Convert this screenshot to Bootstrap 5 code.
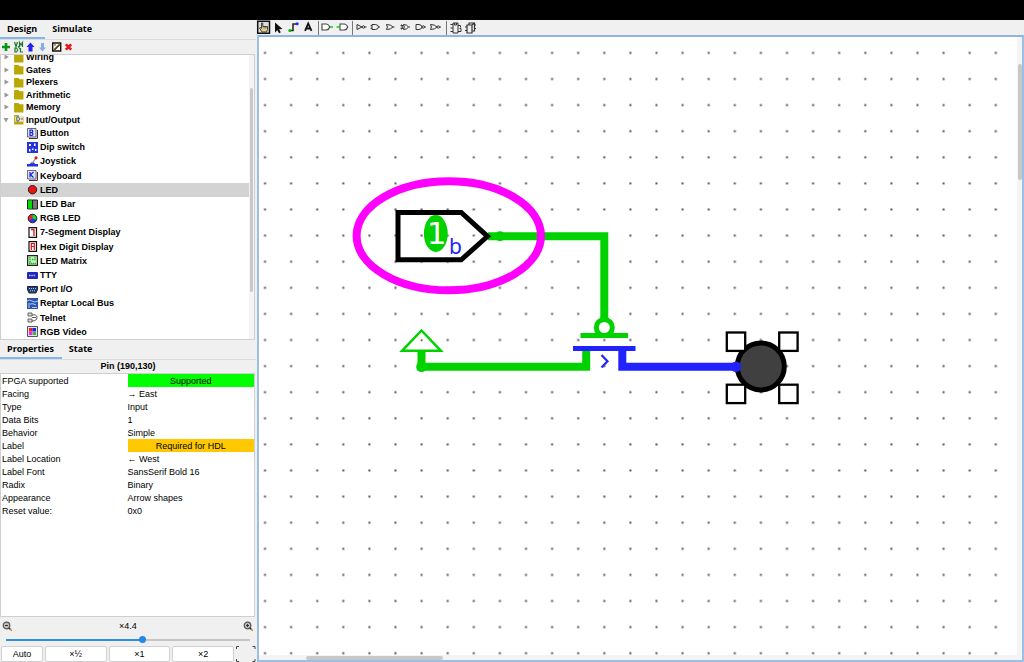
<!DOCTYPE html>
<html lang="en">
<head>
<meta charset="utf-8">
<meta name="viewport" content="width=device-width, initial-scale=1">
<title>Circuit editor</title>
<link href="https://cdn.jsdelivr.net/npm/bootstrap@5.3.0/dist/css/bootstrap.min.css" rel="stylesheet">
<style>
  body { font: 9px/12px "Liberation Sans", Arial, sans-serif; color: #000; background: #f0f0f0; }
  button { color: #000; }
  .titlebar { height: 20px; background: #000; }
  .sidebar { width: 256px; }
  .canvas-pane { background: #fff; border: 2px solid #9bbfe6; border-top-color: #8fb6de; margin-left: 1px; }

  .pane-tabs { height: 20px; border-bottom: 1px solid #dcdcdc; }
  .pane-tab { font: bold 9px/18px "Open Sans", "Noto Sans", sans-serif; background: none; border: 0; border-bottom: 2px solid transparent; padding: 0 8px 0 7px; }
  .pane-tab.active { border-bottom-color: #83b7e8; }

  .tool { width: 15px; height: 15px; padding: 0; border: 0; background: none; line-height: 0; flex: none; }
  .tool svg { display: block; width: 15px; height: 15px; }
  .tool-sep { width: 1px; height: 14px; background: #777; margin: 0 1px 0 2px; flex: none; }
  .lib-tools { height: 14px; }
  .lib-tools .tool { width: 12px; margin-right: 1px; }
  .lib-tools .tool svg { width: 12px; }

  .tree-box { height: 286px; background: #fff; border: 1px solid #cfcfcf; margin-right: 1px; flex: none; }
  .tree { font-weight: bold; margin: -4px 5px 0 0; }
  .tree ul { display: grid; grid-auto-rows: 1fr; }
  .tree .folders { height: 75px; }
  .tree .parts { height: 213px; }
  .tree li { display: flex; align-items: center; min-height: 0; white-space: nowrap; }
  .tree svg { flex: none; display: block; }
  .folders .twist { width: 8px; height: 8px; margin: 0 3px 0 1px; }
  .folders .pic { width: 11px; height: 11px; margin-right: 2px; }
  .parts li { padding-left: 26px; }
  .parts .pic { width: 11px; height: 11px; margin-right: 2px; }
  .parts .chosen { background: #d3d3d3; }

  .track { background: #f4f4f4; }
  .track-v { width: 5px; top: 0; bottom: 0; right: 0; }
  .track-h { height: 5px; left: 0; right: 0; bottom: 0; }
  .thumb { background: #c8c8c8; border-radius: 2px; }
  .tree-box .thumb { width: 3px; height: 204px; margin: 33px 1px 0; }
  .track-v .canvas-thumb { width: 4px; height: 116px; margin: 27px 0 0 1px; }
  .track-h .canvas-thumb { width: 137px; height: 4px; margin: 1px 0 0 47px; }

  .props-title { font-size: 9px; line-height: 13px; font-weight: bold; margin: 0; text-align: center; }
  .props-box { background: #fff; border: 1px solid #cfcfcf; margin-right: 1px; }
  .props { width: 100%; table-layout: fixed; }
  .props th { font-weight: normal; width: 50%; }
  .props th, .props td { height: 13px; padding: 0; line-height: 12px; white-space: nowrap; }
  .props th { padding-left: 1px; }
  .flag-ok { background: #00ff00; text-align: center; }
  .flag-warn { background: #ffc800; text-align: center; }

  .zoom-row { height: 18px; padding: 0 2px; }
  .zoom-row svg { width: 11px; height: 11px; }
  .zoom-slider { -webkit-appearance: none; appearance: none; display: block; height: 9px; margin: 0 6px; background: linear-gradient(to right, #2f8de4 56%, #c4c4c4 56%) center / 100% 2px no-repeat; }
  .zoom-slider::-webkit-slider-thumb { -webkit-appearance: none; width: 7px; height: 7px; border-radius: 50%; background: #2389e6; border: 0; }
  .zoom-btns { height: 18px; padding: 2px 0 0 1px; gap: 2px; }
  .zoom-btn { height: 16px; padding: 0; background: #fff; border: 1px solid #d0d0d0; border-radius: 2px; line-height: 14px; flex: 3 1 0; }
  .zoom-btn.auto { flex: 2 1 0; }
  .zoom-btns .fit { width: 20px; height: 16px; padding: 0; border: 0; background: none; flex: none; }
  .circuit { width: 100%; height: 100%; display: block; }
</style>
<script src="https://cdn.jsdelivr.net/npm/bootstrap@5.3.0/dist/js/bootstrap.bundle.min.js"></script>
</head>
<body>
<div class="d-flex flex-column vh-100 overflow-hidden">
  <header class="titlebar flex-shrink-0"></header>
  <div class="d-flex flex-grow-1 overflow-hidden">

    <aside class="sidebar d-flex flex-column flex-shrink-0">
      <div class="pane-tabs d-flex flex-shrink-0">
        <button class="pane-tab active">Design</button>
        <button class="pane-tab">Simulate</button>
      </div>
      <div class="lib-tools d-flex align-items-center flex-shrink-0">
        <button class="tool" aria-label="Add"><svg viewBox="0 0 12 15"><path d="M6 3v8M2 7h8" stroke="#0a9614" stroke-width="2.6"/></svg></button>
        <button class="tool" aria-label="HDL"><svg viewBox="0 0 12 15" fill="none" stroke="#1c7a2a"><path d="M1.500 2l1.500 4.500L4.500 2M6.500 7V2.500L8 5l1.500-2.500V7M2 8v4h1.500l1.300-2-1.300-2zM7.500 8v4H10M5 6l2 3" stroke-width="1.200"/></svg></button>
        <button class="tool" aria-label="Move up"><svg viewBox="0 0 12 15"><path d="M4.500 2.500L8.500 7H6.500v4.500h-4V7h-2z" fill="#2222ee"/></svg></button>
        <button class="tool" aria-label="Move down"><svg viewBox="0 0 12 15"><path d="M3.500 11.500L7 7.500H5V3H2v4.500H0z" fill="#86aee4"/></svg></button>
        <button class="tool" aria-label="Edit"><svg viewBox="0 0 12 15"><path d="M.7 3h8v8h-8z" fill="#fff" stroke="#111" stroke-width="1.400"/><path d="M2 10l6-6" stroke="#897327" stroke-width="2"/><path d="M2 10.500l6-6M2 5h2" stroke="#111" stroke-width=".8"/></svg></button>
        <button class="tool" aria-label="Remove"><svg viewBox="0 0 12 15"><path d="M.8 4.300l5.400 5.400M6.200 4.300L.8 9.700" stroke="#e81818" stroke-width="2.600"/></svg></button>
      </div>

      <div class="tree-box position-relative overflow-hidden">
        <div class="tree">
          <ul class="folders list-unstyled mb-0">
            <li><svg class="twist" viewBox="0 0 8 8"><path d="M2.500 1.500L7 4l-4.500 2.500z" fill="#999"/></svg><svg class="pic" viewBox="0 0 10 10"><path d="M1 1h4l1 1h3.500v7.500H1z" fill="#b8a800"/></svg><span>Wiring</span></li>
            <li><svg class="twist" viewBox="0 0 8 8"><path d="M2.500 1.500L7 4l-4.500 2.500z" fill="#999"/></svg><svg class="pic" viewBox="0 0 10 10"><path d="M1 1h4l1 1h3.500v7.500H1z" fill="#b8a800"/></svg><span>Gates</span></li>
            <li><svg class="twist" viewBox="0 0 8 8"><path d="M2.500 1.500L7 4l-4.500 2.500z" fill="#999"/></svg><svg class="pic" viewBox="0 0 10 10"><path d="M1 1h4l1 1h3.500v7.500H1z" fill="#b8a800"/></svg><span>Plexers</span></li>
            <li><svg class="twist" viewBox="0 0 8 8"><path d="M2.500 1.500L7 4l-4.500 2.500z" fill="#999"/></svg><svg class="pic" viewBox="0 0 10 10"><path d="M1 1h4l1 1h3.500v7.500H1z" fill="#b8a800"/></svg><span>Arithmetic</span></li>
            <li><svg class="twist" viewBox="0 0 8 8"><path d="M2.500 1.500L7 4l-4.500 2.500z" fill="#999"/></svg><svg class="pic" viewBox="0 0 10 10"><path d="M1 1h4l1 1h3.500v7.500H1z" fill="#b8a800"/></svg><span>Memory</span></li>
            <li><svg class="twist" viewBox="0 0 8 8"><path d="M1.500 2h5L4 6.500z" fill="#999"/></svg><svg class="pic" viewBox="0 0 10 10"><path d="M1 1h4l1 1h3.500v7.500H1z" fill="#b8a800"/><path d="M2 2h7v5H2z" fill="#eee"/><path d="M3.500 2.500h1.500q2 2 0 4H3.500zM7 4.500h2" fill="none" stroke="#444" stroke-width=".8"/></svg><span>Input/Output</span></li>
          </ul>
          <ul class="parts list-unstyled mb-0">
            <li><svg class="pic" viewBox="0 0 11 11"><path d="M2 10.400h8.400V2" fill="none" stroke="#222"/><path d="M.5.500h8.500V9H.5z" fill="#dfe4ff" stroke="#333" stroke-width=".7"/><path d="M3 2v5.500h2q1.800-1.400 0-2.800H3h2q1.500-1.400 0-2.700z" fill="none" stroke="#1a22e0" stroke-width="1.200"/></svg>Button</li>
            <li><svg class="pic" viewBox="0 0 11 11"><path d="M0 0h11v11H0z" fill="#2633dd"/><path d="M2 2h2v2H2zM7 1.500h1.500V4H7zM2 7h1.500v2.500H2zM5 6.500h1.500V8H5zM8 7h1.500v2H8z" fill="#fff"/></svg>Dip switch</li>
            <li><svg class="pic" viewBox="0 0 11 11"><path d="M0 8h3l1-1.500h3L8 8h3v2.500H0z" fill="#2430e0"/><path d="M5 7.500L9 2" stroke="#888" stroke-width="1.200"/><circle cx="9" cy="1.800" r="1.600" fill="#e01818"/></svg>Joystick</li>
            <li><svg class="pic" viewBox="0 0 11 11"><path d="M2 10.400h8.400V2" fill="none" stroke="#222"/><path d="M.5.500h8.500V9H.5z" fill="#dfe4ff" stroke="#333" stroke-width=".7"/><path d="M3 2v5.500M6.500 2L3.500 4.700l3 2.800" fill="none" stroke="#1a22e0" stroke-width="1.200"/></svg>Keyboard</li>
            <li class="chosen"><svg class="pic" viewBox="0 0 11 11"><circle cx="5.500" cy="5.700" r="4.200" fill="#e81414" stroke="#222" stroke-width="1"/></svg>LED</li>
            <li><svg class="pic" viewBox="0 0 11 11"><path d="M.5 1h10v9H.5z" fill="#777" stroke="#222"/><path d="M1 1.500h4v8H1z" fill="#0d0"/><path d="M5.500 1v9" stroke="#222"/></svg>LED Bar</li>
            <li><svg class="pic" viewBox="0 0 11 11"><circle cx="5.500" cy="5.500" r="4.300" fill="#2436e8"/><path d="M5.500 5.500V1.200A4.300 4.300 0 0 0 2 8z" fill="#e22"/><path d="M5.500 5.500V1.200A4.300 4.300 0 0 1 9.500 7z" fill="#1d2"/><circle cx="5.500" cy="5.500" r="4.300" fill="none" stroke="#222"/></svg>RGB LED</li>
            <li><svg class="pic" viewBox="0 0 11 11"><path d="M2 .6h7.500v9.800H2z" fill="#fff" stroke="#111" stroke-width="1.200"/><path d="M4 2.500h3V9" fill="none" stroke="#e01010" stroke-width="1.300"/></svg>7-Segment Display</li>
            <li><svg class="pic" viewBox="0 0 11 11"><path d="M2 .6h7.500v9.800H2z" fill="#fff" stroke="#111" stroke-width="1.200"/><path d="M4.300 9V2.500h3V9M4.300 5.500h3" fill="none" stroke="#e01010" stroke-width="1.200"/></svg>Hex Digit Display</li>
            <li><svg class="pic" viewBox="0 0 11 11"><path d="M.6.600h9.800v9.800H.6z" fill="#c9f5c4" stroke="#222" stroke-width="1.200"/><path d="M3 2v6M8 2v4M2 8.500h7M5 4.500h2" stroke="#18b418" stroke-width="1.300" stroke-dasharray="1.500 .5"/></svg>LED Matrix</li>
            <li><svg class="pic" viewBox="0 0 11 11"><rect x="0" y="2" width="11" height="7" rx="1" fill="#1b26c4"/><path d="M2 5.500h7" stroke="#d2c878" stroke-width="1.500" stroke-dasharray="1.500 .8"/></svg>TTY</li>
            <li><svg class="pic" viewBox="0 0 11 11"><path d="M.5 2.500h10v3L9 9H2L.5 5.500z" fill="#1f3a8f" stroke="#222"/><path d="M2 4.500h7M3 6.800h5" stroke="#9ce09c" stroke-dasharray="1 1"/></svg>Port I/O</li>
            <li><svg class="pic" viewBox="0 0 11 11"><path d="M0 0h11v11H0z" fill="#2b55ad"/><path d="M0 3q3-2 5 0t6 0M3 6q3-1 6 1M5 9.500h5M2 5v5" fill="none" stroke="#b9cbed"/></svg>Reptar Local Bus</li>
            <li><svg class="pic" viewBox="0 0 11 11"><path d="M1 1h4v3H1zM1 7h4v3H1z" fill="#ddd" stroke="#555" stroke-width=".9"/><path d="M5 3q5-1 5 2.500T5 9M5 5.500h4" fill="none" stroke="#333" stroke-width=".8"/></svg>Telnet</li>
            <li><svg class="pic" viewBox="0 0 11 11"><path d="M.5.500h10v10H.5z" fill="#e6e6e6" stroke="#555"/><path d="M2 2h3.500v3.500H2z" fill="#e22"/><path d="M5.500 2H9v3.500H5.500z" fill="#22e"/><path d="M2 5.500h3.500V9H2z" fill="#e2e"/><path d="M6 6h3v3H6z" fill="#3b3"/></svg>RGB Video</li>
          </ul>
        </div>
        <div class="track track-v position-absolute"><div class="thumb"></div></div>
      </div>

      <div class="pane-tabs d-flex flex-shrink-0">
        <button class="pane-tab active">Properties</button>
        <button class="pane-tab">State</button>
      </div>
      <h2 class="props-title flex-shrink-0">Pin (190,130)</h2>
      <div class="props-box flex-grow-1 overflow-hidden">
        <table class="props">
          <tbody>
            <tr><th scope="row">FPGA supported</th><td class="flag-ok">Supported</td></tr>
            <tr><th scope="row">Facing</th><td>→ East</td></tr>
            <tr><th scope="row">Type</th><td>Input</td></tr>
            <tr><th scope="row">Data Bits</th><td>1</td></tr>
            <tr><th scope="row">Behavior</th><td>Simple</td></tr>
            <tr><th scope="row">Label</th><td class="flag-warn">Required for HDL</td></tr>
            <tr><th scope="row">Label Location</th><td>← West</td></tr>
            <tr><th scope="row">Label Font</th><td>SansSerif Bold 16</td></tr>
            <tr><th scope="row">Radix</th><td>Binary</td></tr>
            <tr><th scope="row">Appearance</th><td>Arrow shapes</td></tr>
            <tr><th scope="row">Reset value:</th><td>0x0</td></tr>
          </tbody>
        </table>
      </div>
      <div class="zoom-row d-flex align-items-center justify-content-between flex-shrink-0">
        <svg viewBox="0 0 11 11"><circle cx="4.500" cy="4.500" r="3.300" fill="#bbb" stroke="#555" stroke-width="1.200"/><path d="M3 4.500h3" stroke="#333"/><path d="M7 7l1.500 1.500" stroke="#333" stroke-width="1.500"/><path d="M8.300 8.300l1.500 1.500" stroke="#c08a20" stroke-width="1.500"/></svg>
        <label for="zoom">×4.4</label>
        <svg viewBox="0 0 11 11"><circle cx="4.500" cy="4.500" r="3.300" fill="#bbb" stroke="#555" stroke-width="1.200"/><path d="M3 4.500h3M4.500 3v3" stroke="#333"/><path d="M7 7l1.500 1.500" stroke="#333" stroke-width="1.500"/><path d="M8.300 8.300l1.500 1.500" stroke="#c08a20" stroke-width="1.500"/></svg>
      </div>
      <input id="zoom" class="zoom-slider flex-shrink-0" type="range" min="0" max="100" value="56">
      <div class="zoom-btns d-flex flex-shrink-0">
        <button class="zoom-btn auto">Auto</button>
        <button class="zoom-btn">×½</button>
        <button class="zoom-btn">×1</button>
        <button class="zoom-btn">×2</button>
        <button class="fit" aria-label="Fit to window"><svg class="d-block" width="20" height="16" viewBox="0 0 20 16" fill="none" stroke="#444"><path d="M.5 3V.500H3M16.500.500H19V3M.5 13v2.500H3M16.500 15.500H19V13"/></svg></button>
      </div>
    </aside>

    <main class="d-flex flex-column flex-grow-1 overflow-hidden">
      <div class="d-flex align-items-center flex-shrink-0">
        <button class="tool" aria-label="Poke"><svg viewBox="0 0 15 15"><path d="M1.700 1.200h11.800v12H1.700z" fill="#ddd" stroke="#111" stroke-width="1.500"/><path d="M6 12L3.500 8l1-.5 1 1V3h1.300v3.500h4.700v3l-1 2.500z" fill="#e6cf8a" stroke="#333" stroke-width=".9"/><path d="M8 6.500v2M9.800 6.500v2" stroke="#333" stroke-width=".7"/></svg></button>
        <button class="tool" aria-label="Select"><svg viewBox="0 0 15 15"><path d="M4 2.500v10l2.300-2.200 1.800 2.900 1.700-.9-1.700-3L11.500 9z" fill="#111"/></svg></button>
        <button class="tool" aria-label="Wire"><svg viewBox="0 0 15 15"><path d="M4 10.500h3V4h4" fill="none" stroke="#222" stroke-width="1.500"/><circle cx="3.800" cy="10.500" r="1.500" fill="#0b0"/><circle cx="11.200" cy="3.800" r="1.500" fill="#22f"/></svg></button>
        <button class="tool" aria-label="Text"><svg viewBox="0 0 15 15"><path d="M4 10.800L7.200 3.500l3.300 7.300M5.200 8.500h4" fill="none" stroke="#111" stroke-width="1.800"/></svg></button>
        <span class="tool-sep"></span>
        <button class="tool" aria-label="Input pin"><svg viewBox="0 0 15 15" fill="none"><path d="M2 4h4.500q2.500.500 3.200 3-.7 2.500-3.200 3H2z" fill="#fff" stroke="#444" stroke-width="1.100"/><path d="M10 7h3" stroke="#0c0" stroke-width="1.400"/></svg></button>
        <button class="tool" aria-label="Output pin"><svg viewBox="0 0 15 15" fill="none"><path d="M5 4h4.500q2.500.500 3.200 3-.7 2.500-3.200 3H5z" fill="#fff" stroke="#444" stroke-width="1.100"/><path d="M1.500 7h3" stroke="#0c0" stroke-width="1.400"/></svg></button>
        <span class="tool-sep"></span>
        <button class="tool" aria-label="NOT gate"><svg viewBox="0 0 15 15" fill="none" stroke="#333"><path d="M3 4.500L8 7 3 9.500zM10.800 7h1.700"/><circle cx="9.500" cy="7" r="1.200"/></svg></button>
        <button class="tool" aria-label="AND gate"><svg viewBox="0 0 15 15" fill="none" stroke="#333"><path d="M3 4.500h3.500Q9.500 5 9.500 7t-3 2.500H3zM1.500 5.700H3M1.500 8.300H3M9.500 7H11"/></svg></button>
        <button class="tool" aria-label="OR gate"><svg viewBox="0 0 15 15" fill="none" stroke="#333"><path d="M2.500 4.500q4.500 0 6.500 2.500-2 2.500-6.500 2.500 1.800-2.500 0-5zM9 7h1.500"/></svg></button>
        <button class="tool" aria-label="XOR gate"><svg viewBox="0 0 15 15" fill="none" stroke="#333"><path d="M4.500 4.500q3.500 0 5 2.500-1.500 2.500-5 2.500 1.500-2.500 0-5zM2.500 4.500q1.800 2.500 0 5M1.500 5.700h3M1.500 8.300h3M9.500 7H11"/></svg></button>
        <button class="tool" aria-label="NAND gate"><svg viewBox="0 0 15 15" fill="none" stroke="#333"><path d="M2 4.500h3Q8 5 8 7T5 9.500H2zM10.500 7H12"/><circle cx="9.300" cy="7" r="1.200"/></svg></button>
        <button class="tool" aria-label="NOR gate"><svg viewBox="0 0 15 15" fill="none" stroke="#333"><path d="M1.500 4.500Q6 4.500 8 7q-2 2.500-6.500 2.500 1.800-2.500 0-5zM10.500 7H12"/><circle cx="9.300" cy="7" r="1.200"/></svg></button>
        <span class="tool-sep"></span>
        <button class="tool" aria-label="Flip-flop"><svg viewBox="0 0 15 15" fill="none" stroke="#333"><path d="M5 3h5v10H5zM2.500 4.500H5M2.500 8H5M2.500 11.500H5M10 5.500h2.500v2M10 11.500h3M11.500 8.500H13v3M6.500 3v2h2V3"/></svg></button>
        <button class="tool" aria-label="Register"><svg viewBox="0 0 15 15" fill="none" stroke="#333"><path d="M4 5h5v8H4zM6 5V3h5.500v8H9M2 7h2M2 10.500h2M11.500 5H13M11.500 8.500H13M9 5l2.500-2" stroke-width="1.200"/></svg></button>
      </div>

      <div class="canvas-pane position-relative flex-grow-1 overflow-hidden">
        <svg class="circuit" role="img" aria-label="Circuit">
          <defs>
            <pattern id="grid" x="-7" y="2.900" width="26.100" height="26.100" patternUnits="userSpaceOnUse"><rect x="12" y="12" width="2" height="2" fill="#555"/></pattern>
          </defs>
          <rect width="100%" height="100%" fill="url(#grid)"/>
          <g transform="translate(-259 -37)">
            <g fill="none" stroke="#00d200" stroke-width="8">
              <path d="M488 236.300H604.300V320"/>
              <path d="M421.500 351v15.700H586.200V350"/>
            </g>
            <circle cx="500" cy="236.300" r="5" fill="#00d200"/>
            <circle cx="421.500" cy="366.700" r="5.300" fill="#00d200"/>
            <path d="M421.500 330.500l19.500 20.300h-39z" fill="#fff" stroke="#00d200" stroke-width="2.400"/>
            <circle cx="421.700" cy="340.300" r="1.100" fill="#666"/>
            <circle cx="604.300" cy="327.500" r="8" fill="#fff" stroke="#00d200" stroke-width="5"/>
            <path d="M580.500 335.400H628" stroke="#00d200" stroke-width="5"/>
            <path d="M573 348.500h62.500" stroke="#2222ff" stroke-width="5"/>
            <path d="M622.300 350v16.700H736" fill="none" stroke="#2222ff" stroke-width="8"/>
            <path d="M601.500 355l6 6.300-6 6.200" fill="none" stroke="#2222ff" stroke-width="2.200"/>
            <path d="M398 212.500h63.200L487.500 236.300 461.200 259.800H398z" fill="none" stroke="#000" stroke-width="5"/>
            <ellipse cx="435.800" cy="233.500" rx="11.900" ry="18.500" fill="#00d200"/>
            <text x="436.500" y="244" text-anchor="middle" font-family="DejaVu Sans, sans-serif" font-size="31" fill="#fff">1</text>
            <text x="449" y="254" font-family="Noto Sans, sans-serif" font-size="21" fill="#2222ff">b</text>
            <ellipse cx="448.800" cy="235.800" rx="92.200" ry="54.500" fill="none" stroke="#ff00ff" stroke-width="8"/>
            <circle cx="760.800" cy="366.400" r="23.500" fill="#404040" stroke="#000" stroke-width="5"/>
            <circle cx="736" cy="366.700" r="5.300" fill="#2222ff"/>
            <g fill="#fff" stroke="#000" stroke-width="2.300">
              <rect x="726.800" y="332.500" width="18.400" height="18.400"/>
              <rect x="779.200" y="332.500" width="18.400" height="18.400"/>
              <rect x="726.800" y="384.700" width="18.400" height="18.400"/>
              <rect x="779.200" y="384.700" width="18.400" height="18.400"/>
            </g>
          </g>
        </svg>
        <div class="track track-h position-absolute"><div class="thumb canvas-thumb"></div></div>
        <div class="track track-v position-absolute"><div class="thumb canvas-thumb"></div></div>
      </div>
    </main>
  </div>
</div>
</body>
</html>
